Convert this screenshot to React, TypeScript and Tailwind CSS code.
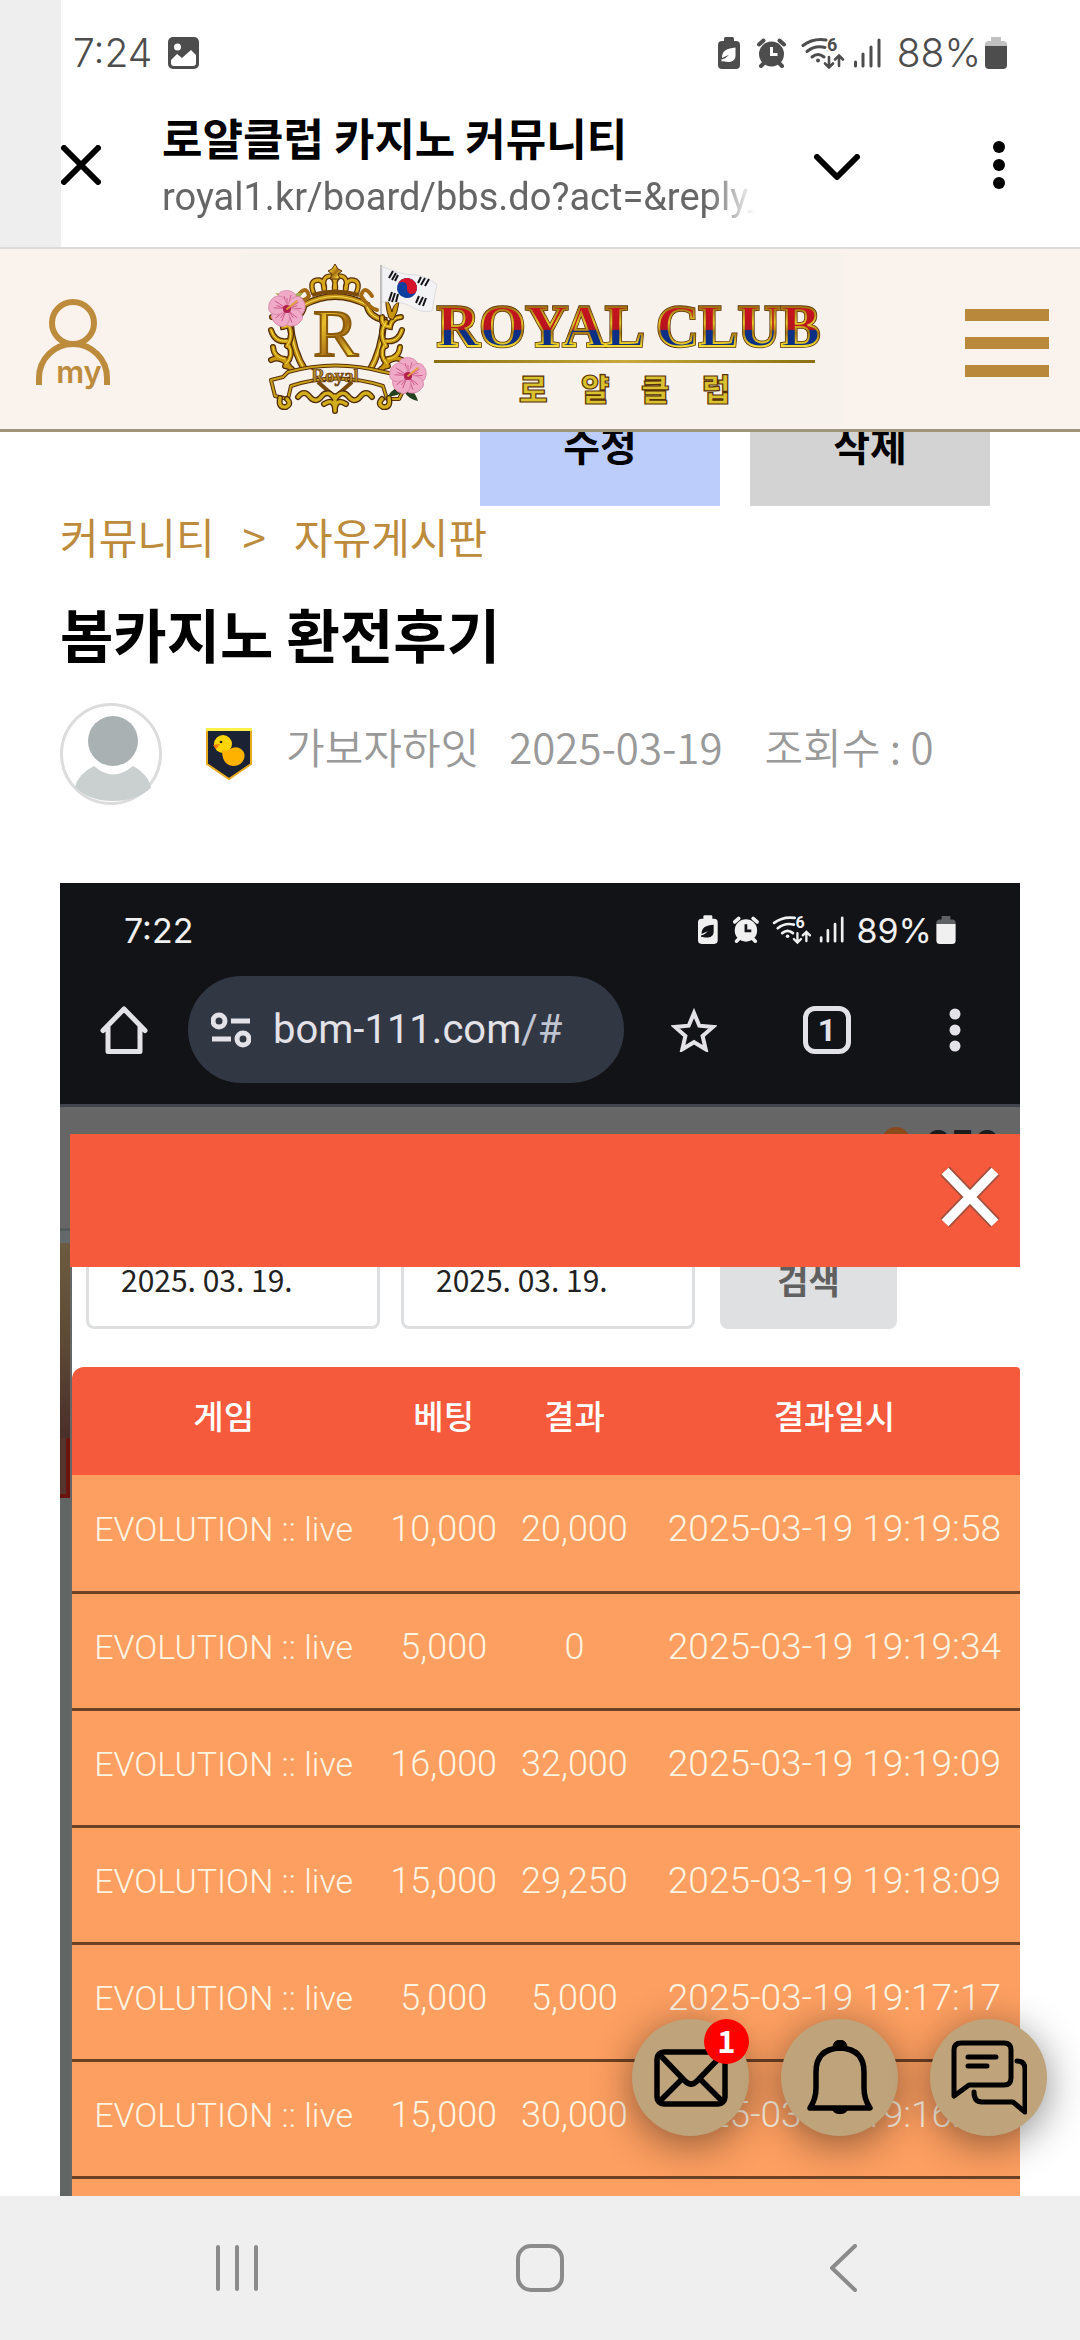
import { useState } from 'react';

const BETS = [
  { game: 'EVOLUTION :: live', bet: '10,000', result: '20,000', date: '2025-03-19 19:19:58' },
  { game: 'EVOLUTION :: live', bet: '5,000', result: '0', date: '2025-03-19 19:19:34' },
  { game: 'EVOLUTION :: live', bet: '16,000', result: '32,000', date: '2025-03-19 19:19:09' },
  { game: 'EVOLUTION :: live', bet: '15,000', result: '29,250', date: '2025-03-19 19:18:09' },
  { game: 'EVOLUTION :: live', bet: '5,000', result: '5,000', date: '2025-03-19 19:17:17' },
  { game: 'EVOLUTION :: live', bet: '15,000', result: '30,000', date: '2025-03-19 19:16:35' },
  { game: '', bet: '', result: '', date: '' },
];

function SignalIcons({ className, cutout }: { className: string; cutout: string }) {
  return (
    <svg viewBox="717 37 163 33" className={className} fill="currentColor" aria-hidden="true">
      {/* power saving battery */}
      <rect x="723" y="37" width="10" height="6" rx="1.5" />
      <rect x="717" y="41" width="22" height="28" rx="4" />
      <path d="M734.500 47.500v8c0 5-4 6.500-7.500 6.500-3 0-4.500-1-5.500-1l7-6.500-7.500 3.500c0-8 5-9.500 13.500-10.500z" fill={cutout} />
      <path d="M720.500 60.500q6-1 9-6" stroke={cutout} strokeWidth="2" fill="none" />
      {/* alarm */}
      <circle cx="770.500" cy="54" r="12.500" />
      <path d="M758 44.500l4.500-4M783 44.500l-4.500-4" stroke="currentColor" strokeWidth="4" strokeLinecap="round" />
      <path d="M760 66l3-3M781 66l-3-3" stroke="currentColor" strokeWidth="4" strokeLinecap="round" />
      <path d="M770.500 47v7.500h6" stroke={cutout} strokeWidth="3" fill="none" />
      {/* wifi 6 */}
      <g fill="none" stroke="currentColor" strokeWidth="3" strokeLinecap="round">
        <path d="M802 45.500q10-7.500 23-5.500" />
        <path d="M806 51.500q8-6.500 18-4" />
        <path d="M811 57q6-5 12 0" />
        <path d="M828 57v10M824 63.500l4 4 4-4M838 66v-10M834 59.500l4-4 4 4" strokeWidth="2.600" />
      </g>
      <circle cx="817" cy="60.500" r="2" />
      <text x="826" y="51" fontSize="18" fontWeight="700" fontFamily="Roboto, sans-serif">6</text>
      {/* signal bars */}
      <path d="M854.500 62v4M862 54v12M870 47v19M878 40v26" stroke="currentColor" strokeWidth="3" strokeLinecap="round" />
    </svg>
  );
}

function BatteryIcon({ className }: { className: string }) {
  return (
    <svg viewBox="0 0 22 32" className={className} fill="currentColor" aria-hidden="true">
      <path d="M6 0h10v4h2q4 0 4 4v1h-22v-1q0-4 4-4h2z" opacity="0.35" />
      <path d="M0 9h22v19q0 4-4 4h-14q-4 0-4-4z" />
    </svg>
  );
}

function Hibiscus({ x, y }: { x: number; y: number }) {
  return (
    <g transform={`translate(${x} ${y})`}>
      {[0, 72, 144, 216, 288].map((angle) => (
        <g key={angle} transform={`rotate(${angle})`}>
          <path d="M0 0C-12-5-11-18-3-18 0-20 11-17 10-9 9-4 4-1 0 0z" fill="#eeaac6" stroke="#d884a8" strokeWidth="0.800" />
          <path d="M0-2L-3-13M1-3L4-14M0-2L0-11" stroke="#cf5b8d" strokeWidth="0.900" />
        </g>
      ))}
      <circle r="4" fill="#b3204f" />
      <path d="M0 0l10-8" stroke="#e0a03a" strokeWidth="1.800" strokeLinecap="round" />
    </g>
  );
}

function SideScroll() {
  return (
    <g fill="none" strokeLinecap="round">
      <g stroke="#4f2a08" strokeWidth="6">
        <path d="M271 317q10 1 11 10 9-1 8-10M270 330q4 13 16 11M286 322q8 12 0 24M272 347q1 11 12 12M288 346q5 9-3 18M270 360q10-5 18 6M284 366q8 1 11 9" />
      </g>
      <g stroke="#c9960f" strokeWidth="3.600">
        <path d="M271 317q10 1 11 10 9-1 8-10M270 330q4 13 16 11M286 322q8 12 0 24M272 347q1 11 12 12M288 346q5 9-3 18M270 360q10-5 18 6M284 366q8 1 11 9" />
      </g>
      <g stroke="#f5e04a" strokeWidth="1">
        <path d="M271 317q10 1 11 10 9-1 8-10M270 330q4 13 16 11M286 322q8 12 0 24M272 347q1 11 12 12M288 346q5 9-3 18" />
      </g>
    </g>
  );
}

function RoyalLogo() {
  return (
    <svg viewBox="240 253 602 172" className="w-[602px] bg-[#f7f2ec]" role="img" aria-label="ROYAL CLUB 로얄클럽">
      <defs>
        <linearGradient id="gold" x1="0" y1="0" x2="1" y2="1">
          <stop offset="0" stopColor="#8a5a0c" />
          <stop offset="0.300" stopColor="#e8c02a" />
          <stop offset="0.550" stopColor="#a36a12" />
          <stop offset="0.800" stopColor="#f0d23c" />
          <stop offset="1" stopColor="#7a4a0a" />
        </linearGradient>
        <linearGradient id="flag" x1="0" y1="0" x2="0" y2="1">
          <stop offset="0.200" stopColor="#c8141e" />
          <stop offset="0.550" stopColor="#b5141e" />
          <stop offset="0.570" stopColor="#0c2f86" />
          <stop offset="1" stopColor="#0c2f86" />
        </linearGradient>
        <linearGradient id="letterEdge" x1="0" y1="0" x2="0" y2="1">
          <stop offset="0.200" stopColor="#9a6a10" />
          <stop offset="0.450" stopColor="#e6c92c" />
          <stop offset="0.600" stopColor="#a8780f" />
          <stop offset="0.800" stopColor="#f3dc2e" />
        </linearGradient>
        <linearGradient id="rule" gradientUnits="userSpaceOnUse" x1="433" y1="0" x2="814" y2="0">
          <stop offset="0" stopColor="#8a7012" />
          <stop offset="0.500" stopColor="#c9a93e" />
          <stop offset="1" stopColor="#8a7012" />
        </linearGradient>
      </defs>

      {/* shield frame */}
      <path d="M303 305q31-17 63 0 2 12 17 15-2 30-15 52M303 305q-2 12-14 15 2 30 16 52" fill="none" stroke="#4f2a08" strokeWidth="7" />
      <path d="M303 305q31-17 63 0 2 12 17 15-2 30-15 52M303 305q-2 12-14 15 2 30 16 52" fill="none" stroke="#c08e14" strokeWidth="4.500" />
      <path d="M303 305q31-17 63 0 2 12 17 15-2 30-15 52M303 305q-2 12-14 15 2 30 16 52" fill="none" stroke="#f6df58" strokeWidth="1.200" />
      <path d="M297 296q8-12 11 0-4 6-9 3M371 296q-8-12-11 0 8 12 16 14" fill="none" stroke="#a36a12" strokeWidth="4" strokeLinecap="round" />
      <SideScroll />
      <g transform="translate(671 0) scale(-1 1)">
        <SideScroll />
      </g>
      <path d="M388 318q-4-12-3-20 5 8 6 14 1-8 7-10-1 10-6 18z" fill="#c9960f" stroke="#4f2a08" strokeWidth="1" />

      {/* crown */}
      <g fill="none" stroke="#5a300a" strokeWidth="5.500">
        <path d="M313 294q-6-14 5-14 7 2 5 13M324 293q-5-17 6-17 6 4 4 17M355 294q6-14-5-14-7 2-5 13M344 293q5-17-6-17-6 4-4 17" />
      </g>
      <g fill="none" stroke="#d8a81c" strokeWidth="3">
        <path d="M313 294q-6-14 5-14 7 2 5 13M324 293q-5-17 6-17 6 4 4 17M355 294q6-14-5-14-7 2-5 13M344 293q5-17-6-17-6 4-4 17" />
      </g>
      <path d="M334 264l3 5 4 2-4 3 2 5h-10l2-5-4-3 4-2z" fill="url(#gold)" stroke="#5a300a" strokeWidth="1" />
      <path d="M311 295q23-7 47 0" fill="none" stroke="#7a4a0a" strokeWidth="4" />

      <text x="312" y="356" fontSize="68" fontFamily="'Liberation Serif', serif" fill="url(#gold)" stroke="#8a5a0c" strokeWidth="2">R</text>

      {/* ribbon */}
      <path d="M287 372q47-13 96 0l10 2 3 14 8-1-6 12h-12l-4-13q-47-15-92 0l-3 13-13-3-4-16 12-3z" fill="#f7f2ec" stroke="#5a300a" strokeWidth="4" strokeLinejoin="round" />
      <path d="M287 372q47-13 96 0l10 2 3 14 8-1-6 12h-12l-4-13q-47-15-92 0l-3 13-13-3-4-16 12-3z" fill="none" stroke="#c9a21a" strokeWidth="2" strokeLinejoin="round" />
      <path d="M317 382l17 15 17-15" fill="none" stroke="#7a4a0a" strokeWidth="4" />
      <text x="334" y="382" textAnchor="middle" fontSize="19" fontWeight="700" fontFamily="'Liberation Serif', serif" fill="#b48a2c" stroke="#5a300a" strokeWidth="0.700">Royal</text>
      <g fill="none" stroke="#4f2a08" strokeWidth="6" strokeLinecap="round">
        <path d="M279 398q-2 10 6 9 6-3 1-8M388 398q2 10-6 9-6-3-1-8M297 397q6-8 12 0 6 7 12-1 6-7 13 3 7-10 13-3 6 8 12 1 6-8 12 0M334 396v15M323 404q9-6 11 4 2-10 11-4" />
      </g>
      <g fill="none" stroke="#d2ae1c" strokeWidth="3.400" strokeLinecap="round">
        <path d="M279 398q-2 10 6 9 6-3 1-8M388 398q2 10-6 9-6-3-1-8M297 397q6-8 12 0 6 7 12-1 6-7 13 3 7-10 13-3 6 8 12 1 6-8 12 0M334 396v15M323 404q9-6 11 4 2-10 11-4" />
      </g>

      {/* flowers */}
      <path d="M274 293l9 1 2 8zM290 298q4-6 12-5l-6 8z" fill="#a3ad4e" />
      <Hibiscus x={286} y={309} />
      <path d="M402 387q-10 0-15 9 9 1 16-5zM403 388q10 0 14 13-10-2-14-10z" fill="#24401f" />
      <Hibiscus x={407} y={376} />

      {/* flag */}
      <path d="M380 265v50" stroke="#a9a9a9" strokeWidth="1.500" />
      <path d="M381 266q18 9 34 9 14 3 21 10-2 8-5 26-12 2-20-4-12-7-30-5z" fill="#f3f3f5" stroke="#d6d6da" strokeWidth="0.800" />
      <g transform="rotate(12 406 288)">
        <circle cx="406" cy="288" r="10" fill="#0c3f9e" />
        <path d="M396 288a10 10 0 0 1 20 0a5 5 0 0 1-10 0a5 5 0 0 0-10 0z" fill="#d8142c" />
      </g>
      <g stroke="#16161a" strokeWidth="2">
        <path d="M388 278l4-7M391 280l4-7M394 281l3-6M388 301l3-9M391 302l3-9M395 302l2-8M417 283l3-6M420 285l4-7M424 286l4-7M415 303l3-7M418 305l4-8M422 306l3-8" />
      </g>

      <text x="436" y="346" fontSize="59" fontWeight="700" fontFamily="'Liberation Serif', serif" fill="url(#flag)" stroke="#5a300a" strokeWidth="3.500" paintOrder="stroke">ROYAL CLUB</text>
      <text x="436" y="346" fontSize="59" fontWeight="700" fontFamily="'Liberation Serif', serif" fill="none" stroke="url(#letterEdge)" strokeWidth="2">ROYAL CLUB</text>
      <rect x="433" y="360" width="381" height="3" fill="url(#rule)" />
      <text x="518 580 640 701" y="401" fontSize="31" fontWeight="900" fontFamily="'Noto Sans CJK KR', sans-serif" fill="#d9c22e" stroke="#5a3208" strokeWidth="1.200">로얄클럽</text>
    </svg>
  );
}

function BrowserBar() {
  return (
    <header className="flex shrink-0 border-b-2 border-[#dcdbda] bg-white">
      <div className="w-[61px] bg-[#eeeeee]" />
      <div className="min-w-0 flex-1 pb-[7px]">
        <div className="flex h-[90px] items-center justify-between pt-4 pr-[73px] pl-3 font-['Inter',sans-serif] text-[39px] font-light text-[#4d4d4d]">
          <div className="flex items-center gap-4">
            <span>7:24</span>
            <svg viewBox="0 0 31 32" className="h-8 w-[31px]" aria-hidden="true">
              <rect width="31" height="32" rx="5" fill="currentColor" />
              <circle cx="9.500" cy="10" r="3.500" fill="#fff" />
              <path d="M3 23l6-6 5 4 9-8 5 5v8q0 3-3 3h-19q-3 0-3-3z" fill="#fff" />
            </svg>
          </div>
          <div className="flex items-center">
            <SignalIcons className="mr-4 h-[33px] w-[163px]" cutout="#fff" />
            <span>88%</span>
            <BatteryIcon className="ml-1 h-8 w-[22px]" />
          </div>
        </div>
        <div className="flex h-[150px] items-center pr-[75px]">
          <button type="button" aria-label="닫기" className="shrink-0">
            <svg viewBox="0 0 40 40" className="size-10" stroke="#000" strokeWidth="6" strokeLinecap="round">
              <path d="M3 3l34 34M37 3L3 37" />
            </svg>
          </button>
          <div className="ml-[61px] min-w-0 flex-1 pt-1">
            <h1 className="truncate font-['Noto_Sans_CJK_KR',sans-serif] text-[44px] leading-[56px] font-bold text-black">
              로얄클럽 카지노 커뮤니티
            </h1>
            <p className="mt-1 overflow-hidden font-['Roboto',sans-serif] text-[38px] leading-[56px] whitespace-nowrap text-[#666666] [mask-image:linear-gradient(to_right,black_92%,transparent)]">
              royal1.kr/board/bbs.do?act=&amp;reply_
            </p>
          </div>
          <button type="button" aria-label="펼치기" className="ml-[59px] shrink-0 pt-1">
            <svg viewBox="0 0 46 26" className="h-[26px] w-[46px]" fill="none" stroke="#000" strokeWidth="6" strokeLinecap="round" strokeLinejoin="round">
              <path d="M3 3l20 20 20-20" />
            </svg>
          </button>
          <button type="button" aria-label="더보기" className="ml-[133px] shrink-0">
            <svg viewBox="0 0 12 48" className="h-12 w-3">
              <circle cx="6" cy="6" r="6" />
              <circle cx="6" cy="24" r="6" />
              <circle cx="6" cy="42" r="6" />
            </svg>
          </button>
        </div>
      </div>
    </header>
  );
}

function SiteHeader() {
  return (
    <div className="flex h-[183px] shrink-0 items-center justify-between border-b-[3px] border-[#a2967a] bg-[#faf2ec] pr-[31px] pl-9">
      <a href="#my" aria-label="my" className="w-[82px] pt-3">
        <svg viewBox="0 0 82 92" className="h-[92px] w-[82px]" fill="none" stroke="#bd8b3c" strokeWidth="6">
          <circle cx="37" cy="24" r="21" />
          <path d="M3 86v-7a34 34 0 0 1 68 0v7" />
          <text x="43" y="84" textAnchor="middle" fontSize="31" fontWeight="600" fontFamily="Inter, sans-serif" fill="#bd8b3c" stroke="none">my</text>
        </svg>
      </a>
      <a href="#home">
        <RoyalLogo />
      </a>
      <button type="button" aria-label="메뉴" className="flex w-[84px] flex-col gap-4 pt-2">
        <span className="h-3 bg-[#b9883a]" />
        <span className="h-3 bg-[#b9883a]" />
        <span className="h-3 bg-[#b9883a]" />
      </button>
    </div>
  );
}

function PostInfo() {
  return (
    <div className="px-[60px] font-['Noto_Sans_CJK_KR',sans-serif]">
      <div className="-mt-[46px] mr-[30px] flex justify-end gap-[30px] text-[40px] font-bold text-black">
        <button type="button" className="h-[120px] w-60 bg-[#bdcdfb] pb-1">수정</button>
        <button type="button" className="h-[120px] w-60 bg-[#d3d3d3] pb-1">삭제</button>
      </div>
      <nav className="mt-0.5 flex gap-7 text-[42px] leading-[56px] text-[#bd8b3c]">
        <a href="#community">커뮤니티</a>
        <span>&gt;</span>
        <a href="#free">자유게시판</a>
      </nav>
      <h2 className="mt-[29px] text-[58px] leading-[80px] font-bold text-black">봄카지노 환전후기</h2>
      <div className="mt-[30px] flex items-center text-[42px] leading-[60px] font-[350] text-[#999999]">
        <svg viewBox="0 0 102 102" className="size-[102px]" aria-hidden="true">
          <circle cx="51" cy="51" r="49.500" fill="#fff" stroke="#dcdcdc" strokeWidth="3" />
          <circle cx="53" cy="38" r="25" fill="#aab1b3" />
          <path d="M34 63q19 17 39 0 16 9 18 22-15 13-38 13-24 0-38-14 3-13 19-21z" fill="#cacfcf" />
        </svg>
        <svg viewBox="0 0 46 52" className="ml-11 h-[52px] w-[46px]" aria-hidden="true">
          <path d="M1 1h44v35l-22 15-22-15z" fill="#1b2233" stroke="#e8a91c" strokeWidth="2" />
          <path d="M0 1.500h46" stroke="#fff04a" strokeWidth="3" />
          <circle cx="17" cy="16" r="9" fill="#ffd500" />
          <path d="M16 22q5 2 10-2 5-2 9 1 5 4 3 10-3 7-11 7-11-1-11-16z" fill="#ffb300" />
          <path d="M7 17l7-1-4 5z" fill="#f07800" />
          <circle cx="15" cy="14" r="1.300" fill="#222" />
        </svg>
        <p className="ml-[34px] flex gap-[30px] pb-4">
          <span>가보자하잇</span>
          <span>2025-03-19</span>
          <span className="pl-3">조회수 : 0</span>
        </p>
      </div>
    </div>
  );
}

function CapturedBrowserBar() {
  return (
    <div className="border-b-[3px] border-[#42454d] bg-[#121317] pt-5 pb-[21px] text-[#e3e2e8]">
      <div className="flex h-[54px] items-center justify-between pr-16 pl-16 font-['Inter',sans-serif] text-[34px] text-[#f0f0f0]">
        <span>7:22</span>
        <div className="flex items-center">
          <SignalIcons className="mr-3 h-[30px] w-[146px]" cutout="#121317" />
          <span>89%</span>
          <BatteryIcon className="ml-1 h-7 w-5" />
        </div>
      </div>
      <div className="mt-[19px] flex h-[107px] items-center pr-[59px] pl-10">
        <svg viewBox="0 0 48 48" className="size-12" fill="none" stroke="currentColor" strokeWidth="5" strokeLinejoin="round" strokeLinecap="round">
          <path d="M3 24.500l21-21.500 21 21.500M8 21v24.500h32v-24.500" />
        </svg>
        <div className="ml-10 flex h-full flex-1 items-center rounded-full bg-[#323744] pl-[23px]">
          <svg viewBox="0 0 40 36" className="h-9 w-10" fill="none" stroke="currentColor" strokeWidth="5">
            <circle cx="8" cy="9" r="6" />
            <path d="M20 9h19M1 27h19" />
            <circle cx="32" cy="27" r="6" />
          </svg>
          <span className="ml-[22px] font-['Roboto',sans-serif] text-[40px] leading-[56px] whitespace-nowrap">
            bom-111.com<span className="text-[#c0c4d0]">/#</span>
          </span>
        </div>
        <svg viewBox="0 0 46 44" className="ml-[47px] h-11 w-[46px]" fill="none" stroke="currentColor" strokeWidth="4">
          <path d="M23 5l5.300 12.700 13.700 1.200-10.400 9 3.100 13.400L23 34.200 11.300 41.300l3.100-13.400L4 18.900l13.700-1.200z" />
        </svg>
        <span className="ml-[86px] flex size-12 items-center justify-center rounded-xl border-[5px] border-[#e3e2e8] font-['Roboto',sans-serif] text-[32px] leading-none font-bold">
          1
        </span>
        <svg viewBox="0 0 12 44" className="ml-[98px] h-11 w-3" fill="currentColor">
          <circle cx="6" cy="6" r="5.500" />
          <circle cx="6" cy="22" r="5.500" />
          <circle cx="6" cy="38" r="5.500" />
        </svg>
      </div>
    </div>
  );
}

function BetTable() {
  return (
    <table className="w-full table-fixed border-collapse text-center font-['Roboto',sans-serif] text-[36px] leading-[44px] text-[#fff4e2]">
      <colgroup>
        <col className="w-[32%]" />
        <col className="w-[14%]" />
        <col className="w-[14%]" />
        <col className="w-[40%]" />
      </colgroup>
      <thead>
        <tr className="h-[108px] bg-[#f55a3c] font-['Noto_Sans_CJK_KR',sans-serif] text-[33px] text-white">
          <th className="pb-3 font-medium">게임</th>
          <th className="pb-3 pl-1 font-medium">베팅</th>
          <th className="pb-3 font-medium">결과</th>
          <th className="pb-3 pl-2 font-medium">결과일시</th>
        </tr>
      </thead>
      <tbody>
        {BETS.map((row, i) => (
          <tr key={i} className="h-[117px] border-b-[3px] border-[#6b4226] bg-[#fd9f61] font-light whitespace-nowrap">
            <td className="pb-2 text-[34px]">{row.game}</td>
            <td className="pb-2 pl-1">{row.bet}</td>
            <td className="pb-2">{row.result}</td>
            <td className="pb-2 pl-2 text-[37px]">{row.date}</td>
          </tr>
        ))}
      </tbody>
    </table>
  );
}

function PostImage() {
  const [from, setFrom] = useState('2025. 03. 19.');
  const [to, setTo] = useState('2025. 03. 19.');
  const dateClass =
    'h-[94px] w-[294px] rounded-lg border-[3px] border-[#dedfe0] bg-white pb-1.5 pl-8 text-[30px] text-[#222222]';

  return (
    <div className="mx-[60px] mt-[78px] bg-[#666666]">
      <CapturedBrowserBar />
      <div className="flex h-[27px] items-start justify-end gap-4 overflow-hidden pt-5 pr-5">
        <span className="size-7 rounded-full bg-[#8a4a1c]" />
        <span className="font-['Inter',sans-serif] text-[38px] leading-[34px] font-bold text-[#1c1c1c]">250</span>
      </div>
      <div className="flex">
        {/* page behind the popup, only its edge shows */}
        <div className="flex w-[10px] shrink-0 flex-col bg-[#616664]">
          <div className="h-[94px] bg-[#666666]" />
          <div className="h-[3px] bg-[#54595a]" />
          <div className="h-3 bg-[#646a6b]" />
          <div className="h-[195px] bg-linear-to-b from-[#6d5b40] via-[#5d4a36] to-[#4a2f2a]" />
          <div className="h-[60px] border-r-4 border-b-4 border-[#6a1410] bg-[#55352c]" />
        </div>
        <div className="min-w-0 flex-1">
          <div className="flex h-[133px] items-center justify-end bg-[#f55a3c] pr-[18px] pb-2">
            <button type="button" aria-label="팝업 닫기">
              <svg viewBox="0 0 64 66" className="h-[66px] w-16" fill="none">
                <path d="M7 7l50 52M57 7L7 59" stroke="#a3503c" strokeWidth="13" />
                <path d="M7 7l50 52M57 7L7 59" stroke="#fff" strokeWidth="9.500" />
              </svg>
            </button>
          </div>
          <div className="border-l-2 border-[#666666] bg-white font-['Noto_Sans_CJK_KR',sans-serif]">
            <div className="overflow-hidden">
              <form className="-mt-8 flex pl-[14px]" onSubmit={(e) => e.preventDefault()}>
                <input aria-label="시작일" className={dateClass} value={from} onChange={(e) => setFrom(e.target.value)} />
                <input aria-label="종료일" className={`${dateClass} ml-[21px]`} value={to} onChange={(e) => setTo(e.target.value)} />
                <button type="submit" className="ml-[25px] h-[94px] w-[177px] rounded-lg bg-[#dfe0e2] pb-1.5 text-[34px] font-bold text-[#606060]">
                  검색
                </button>
              </form>
            </div>
            <div className="mt-[38px] overflow-hidden rounded-tl-xl rounded-tr-sm">
              <BetTable />
            </div>
          </div>
        </div>
      </div>
    </div>
  );
}

function FloatingButtons() {
  const round =
    'relative flex size-[117px] items-center justify-center rounded-full bg-[#bfa37a] shadow-[0_8px_40px_rgba(0,0,0,0.45)]';

  return (
    <div className="absolute right-[33px] bottom-[60px] flex gap-8">
      <button type="button" aria-label="쪽지" className={round}>
        <svg viewBox="0 0 76 60" className="h-[60px] w-[76px]" fill="none" stroke="#000" strokeWidth="5.500" strokeLinejoin="round">
          <rect x="4" y="4" width="68" height="52" rx="7" />
          <path d="M6 6l26 27q6 6 12 0l26-27M6 54l23-23M70 54l-23-23" />
        </svg>
        <span className="absolute top-0 right-0 flex size-[45px] items-center justify-center rounded-full bg-[#ff0000] pb-1 font-['Noto_Sans_CJK_KR',sans-serif] text-[31px] leading-none font-bold text-white">
          1
        </span>
      </button>
      <button type="button" aria-label="알림" className={round}>
        <svg viewBox="0 0 66 76" className="h-[76px] w-[66px]" fill="none" stroke="#000" strokeWidth="5.500" strokeLinejoin="round">
          <path d="M3 68q6-9 6-20v-16q0-23 24-24 24 1 24 24v16q0 11 6 20z" />
          <path d="M26 7a7 7 0 0 1 14 0zM25 69a8.500 7 0 0 0 16 0z" fill="#000" strokeWidth="1" />
        </svg>
      </button>
      <button type="button" aria-label="채팅" className={round}>
        <svg viewBox="0 0 76 76" className="size-[76px]" fill="none" stroke="#000" strokeWidth="5" strokeLinecap="round" strokeLinejoin="round">
          <path d="M3 56V10q0-7 7-7h43q7 0 7 7v28q0 7-7 7H18z" />
          <path d="M17 17h28M17 26h19" />
          <path d="M66 21q8 0 8 8v43l-12-10H31q-8 0-8-10" />
        </svg>
      </button>
    </div>
  );
}

function SystemNav() {
  return (
    <nav className="flex h-36 shrink-0 items-center justify-between bg-[#efefef] px-[213px]">
      <button type="button" aria-label="최근 앱" className="flex w-12 justify-center">
        <svg viewBox="0 0 44 48" className="h-12 w-11" stroke="#8b8b8b" strokeWidth="4" strokeLinecap="round">
          <path d="M3 3v42M22 3v42M41 3v42" />
        </svg>
      </button>
      <button type="button" aria-label="홈" className="flex w-12 justify-center">
        <svg viewBox="0 0 48 48" className="size-12" fill="none" stroke="#8b8b8b" strokeWidth="4">
          <rect x="2" y="2" width="44" height="44" rx="13" />
        </svg>
      </button>
      <button type="button" aria-label="뒤로" className="flex w-12 justify-center">
        <svg viewBox="0 0 28 48" className="h-12 w-7" fill="none" stroke="#8b8b8b" strokeWidth="4" strokeLinecap="round" strokeLinejoin="round">
          <path d="M26 2L3 24l23 22" />
        </svg>
      </button>
    </nav>
  );
}

export default function App() {
  return (
    <div className="flex h-screen flex-col overflow-hidden bg-white">
      <BrowserBar />
      <SiteHeader />
      <main className="relative min-h-0 flex-1 overflow-hidden bg-white">
        <PostInfo />
        <PostImage />
        <FloatingButtons />
      </main>
      <SystemNav />
    </div>
  );
}
